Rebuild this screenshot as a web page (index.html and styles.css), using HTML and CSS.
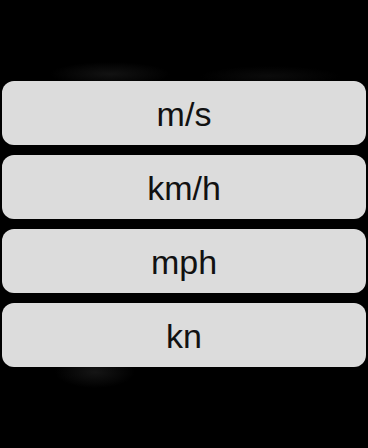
FILE: index.html
```html
<!DOCTYPE html>
<html>
<head>
<meta charset="utf-8">
<link rel="stylesheet" href="styles.css">
</head>
<body>
<div class="screen">
  <div class="list">
    <button class="unit">m/s</button>
    <button class="unit">km/h</button>
    <button class="unit">mph</button>
    <button class="unit">kn</button>
  </div>
</div>
</body>
</html>
```
FILE: styles.css
```css
html, body {
  margin: 0;
  padding: 0;
  background: #000;
}
.screen {
  width: 368px;
  height: 448px;
  box-sizing: border-box;
  padding: 81px 2px 0 2px;
  background:
    radial-gradient(ellipse 60px 12px at 110px 74px, rgba(30,30,30,0.6), rgba(0,0,0,0)),
    radial-gradient(ellipse 70px 10px at 270px 76px, rgba(22,22,22,0.5), rgba(0,0,0,0)),
    radial-gradient(ellipse 40px 16px at 95px 372px, rgba(30,30,30,0.7), rgba(0,0,0,0)),
    #000;
}
.list {
  display: flex;
  flex-direction: column;
  gap: 10px;
}
.unit {
  display: flex;
  align-items: center;
  justify-content: center;
  height: 64px;
  margin: 0;
  padding: 2px 0 0 0;
  border: none;
  border-radius: 12px;
  background: #dcdcdc;
  color: #111;
  font-family: "Liberation Sans", Arial, sans-serif;
  font-size: 34px;
  font-weight: 400;
}
```
